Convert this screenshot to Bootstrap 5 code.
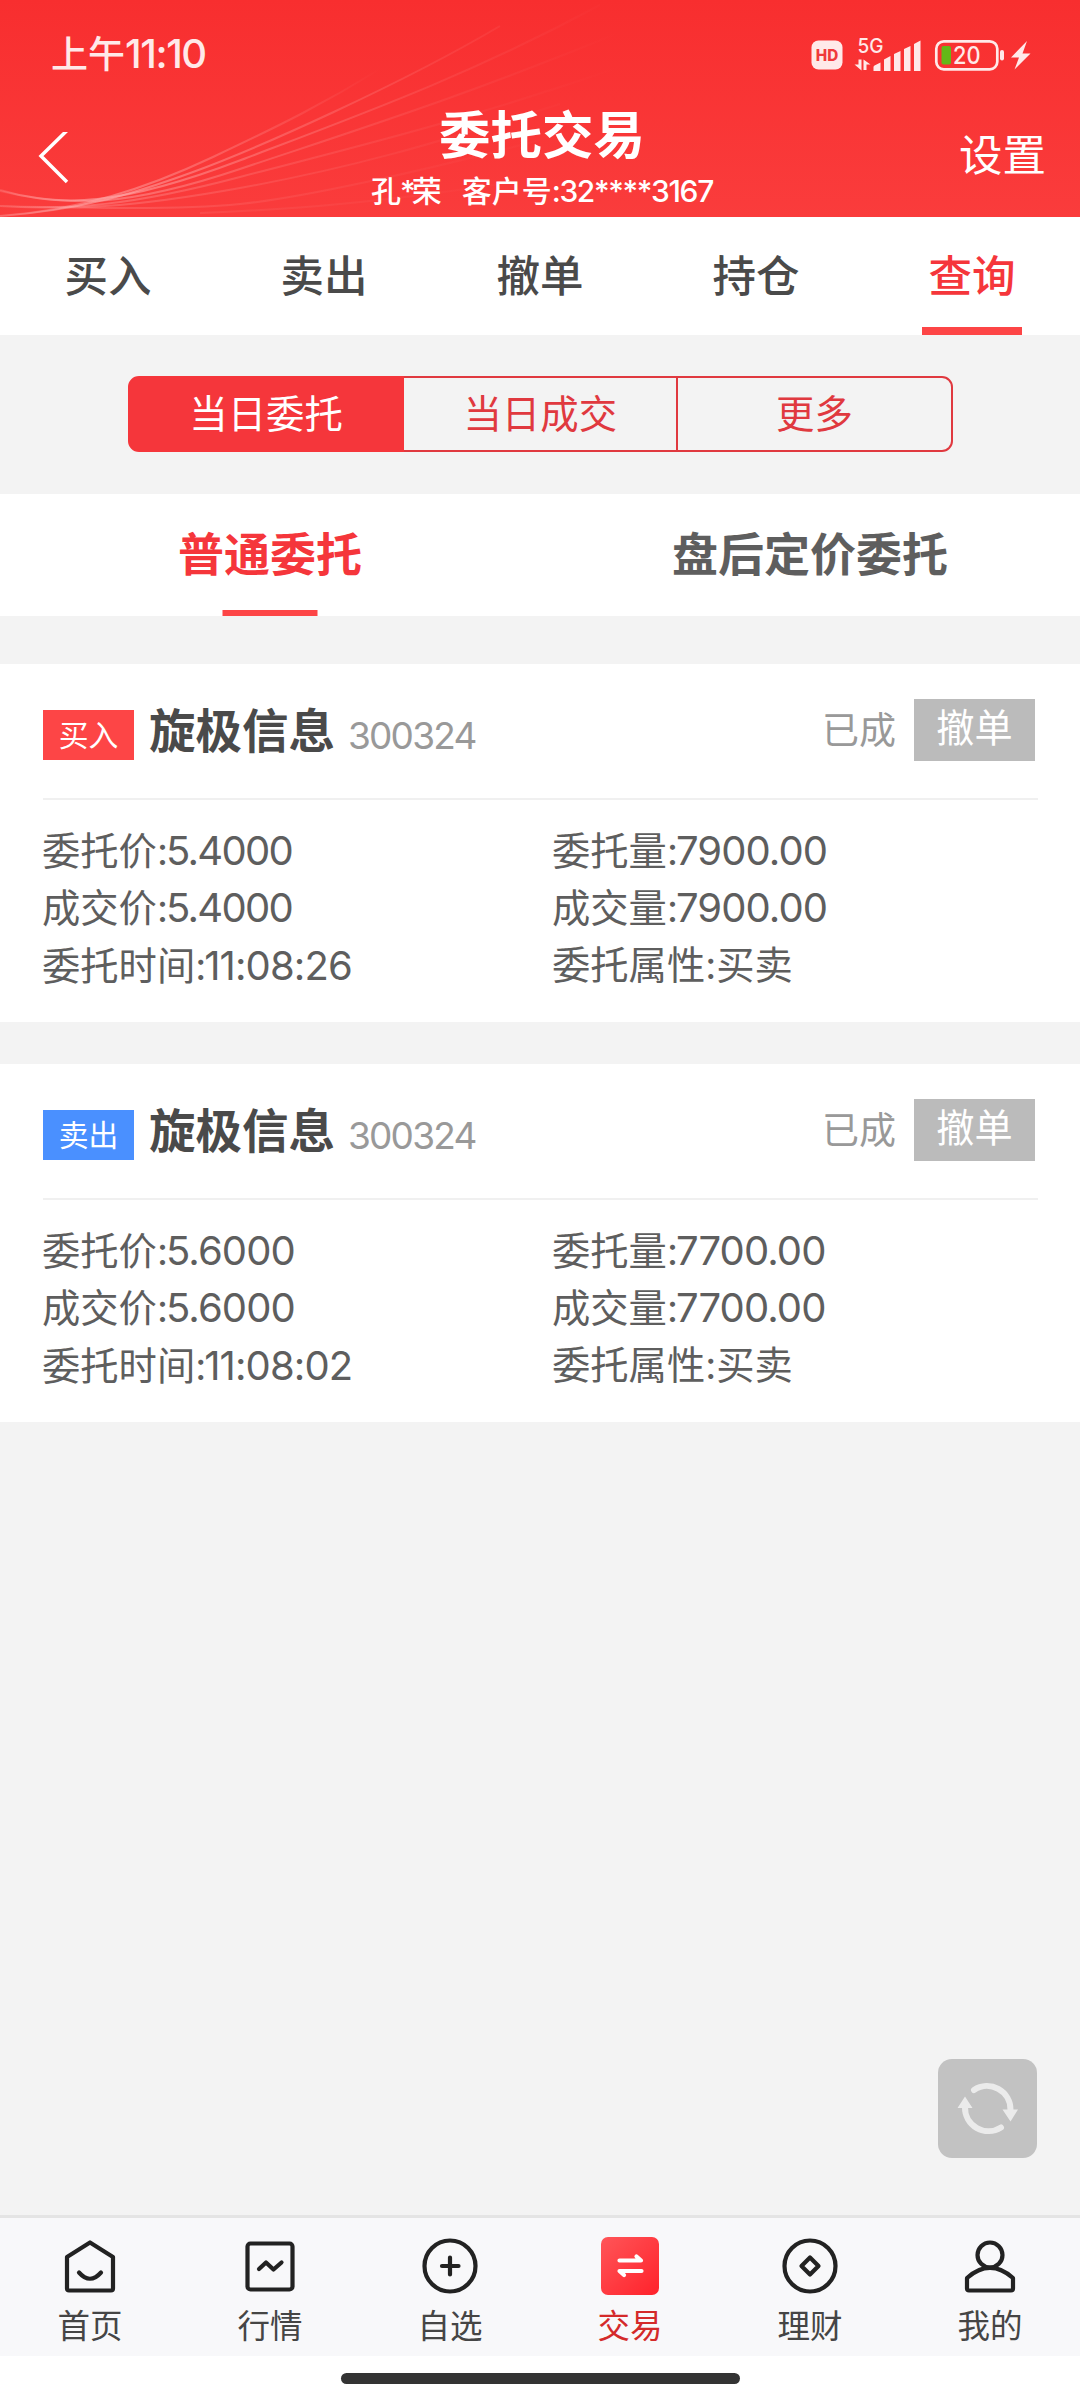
<!DOCTYPE html>
<html lang="zh-CN">
<head>
<meta charset="utf-8">
<meta name="viewport" content="width=device-width, initial-scale=1">
<title>委托交易</title>
<link href="https://cdn.jsdelivr.net/npm/bootstrap@5.3.0/dist/css/bootstrap.min.css" rel="stylesheet">
<style>
  body{width:1080px;height:2400px;background:#f3f3f3;color:#5e5e5e;font-family:Inter,"Noto Sans CJK SC",sans-serif;overflow:hidden}
  .app-head{height:217px;background:linear-gradient(#f82e2f,#fa3c3c);flex:none}
  .app-head .waves{inset:0}
  .status{height:108px;padding:0 45px 0 51px;color:#ffe9e9}
  .clock{font-size:37px;line-height:108px;font-weight:500}
  .clock span{font-size:40px;letter-spacing:-1.4px}
  .titlebar{height:109px;padding:0 34px 0 38px}
  .side{width:200px}
  .page-title{font-size:51.5px;line-height:54px;font-weight:700}
  .account{font-size:30px;line-height:40px;font-weight:500;white-space:pre;padding-top:9px}
  .account .star{letter-spacing:-4px;margin-left:-1px}
  .account .num{letter-spacing:-1.35px}
  .account .who{margin-right:4px}
  .setting{font-size:43.5px;line-height:94px}
  .main-tabs{height:118px;flex:none}
  .main-tabs .nav-link{height:118px;padding:0;color:#4a4a4a;font-size:43.5px;font-weight:500;line-height:118px;border-radius:0}
  .main-tabs .active{color:#f5363b}
  .bar-line{left:50%;bottom:0;transform:translateX(-50%);background:#fd4546}
  .main-tabs .bar-line{width:100px;height:8px}
  .segments{height:159px;padding:41px 127.5px 0 128px;flex:none}
  .segments .btn{--bs-btn-color:#e0393f;--bs-btn-border-color:#e0393f;--bs-btn-active-bg:#f5363b;--bs-btn-active-border-color:#f5363b;--bs-btn-active-color:#fff;height:76px;padding:0;border-width:2px;font-size:38.4px;line-height:70px;flex:1 1 0}
  .segments .btn-group{border-radius:11px}
  .segments .btn-group > .btn:not(:first-child){margin-left:-2px}
  .segments .btn-group > .btn:first-child{border-radius:11px 0 0 11px}
  .segments .btn-group > .btn:last-child{border-radius:0 11px 11px 0}
  .sub-tabs{height:122px;flex:none}
  .sub-tabs .nav-link{height:122px;padding:0;font-size:46px;font-weight:700;line-height:121px;color:#5e5e5e}
  .sub-tabs .active{color:#f5363b}
  .sub-tabs .bar-line{width:95px;height:6.5px}
  .order{height:358px;padding:0 42px 0 43px;margin-bottom:42px;flex:none}
  .order-head{height:136px;border-bottom:2px solid #f0f0f0}
  .side-tag{width:91px;height:50px;line-height:50px;font-size:29.8px;margin-top:8px}
  .buy{background:#fd4546}
  .sell{background:#4a90ff}
  .stock{font-size:46.5px;line-height:60px;font-weight:700;color:#4a4a4a;margin-left:15px}
  .code{font-size:37px;line-height:60px;color:#999;letter-spacing:-1.8px;margin:9px 0 0 13px}
  .state{font-size:37px;line-height:60px;color:#999;margin:0 18px 0 auto}
  .cancel{width:121px;height:62px;line-height:59px;font-size:38.2px;background:#bbb;margin:0 3px 2px 0}
  .details{padding-top:22px;font-size:38.3px;line-height:57.3px}
  .details dl{width:509px;margin:0 0 0 -1px;flex:none}
  .details dl + dl{margin-left:1px}
  .details div{height:57.3px;white-space:nowrap}
  .details b{font-weight:400;font-size:40px;letter-spacing:-.9px;margin-left:-2px}
  .details b.tight{letter-spacing:-1.7px}
  .refresh{right:43px;top:2059px;width:99px;height:99px;border-radius:14px;background:#c2c2c2}
  .bottom-nav{height:141px;border-top:3px solid #e4e4e4;background:#f8f8fa;flex:none}
  .bottom-nav a{width:180px;color:#454545;font-size:32.5px;line-height:62px;padding-top:18px}
  .bottom-nav a.on{color:#d42a2a}
  .bottom-nav svg{flex:none;width:60px;height:60px;fill:none;stroke:#222;stroke-width:4.2;stroke-linejoin:round;stroke-linecap:round}
  .gesture{height:44px;flex:none}
  .gesture div{width:399px;height:11px;background:#333;margin-top:1px}
</style>
<script src="https://cdn.jsdelivr.net/npm/bootstrap@5.3.0/dist/js/bootstrap.bundle.min.js"></script>
</head>
<body class="d-flex flex-column position-relative">
<header class="app-head position-relative text-white">
  <svg class="waves position-absolute" width="1080" height="217" fill="none" stroke-width="2">
    <defs>
      <linearGradient id="fade" gradientUnits="userSpaceOnUse" x1="0" y1="0" x2="620" y2="0">
        <stop offset="0" stop-color="#ffb0b0" stop-opacity=".2"/><stop offset=".15" stop-color="#ffb0b0" stop-opacity=".6"/>
        <stop offset=".42" stop-color="#ffb0b0" stop-opacity=".32"/><stop offset=".7" stop-color="#ffb0b0" stop-opacity=".12"/><stop offset="1" stop-color="#ffb0b0" stop-opacity="0"/>
      </linearGradient>
      <linearGradient id="fadeShort" gradientUnits="userSpaceOnUse" x1="0" y1="0" x2="380" y2="0">
        <stop offset="0" stop-color="#ffb0b0" stop-opacity=".2"/><stop offset=".3" stop-color="#ffb0b0" stop-opacity=".5"/><stop offset="1" stop-color="#ffb0b0" stop-opacity="0"/>
      </linearGradient>
    </defs>
    <path stroke="url(#fadeShort)" d="M0 216C80 210 145 189 213 157S325 103 380 69"/>
    <path stroke="url(#fade)" d="M0 216C80 210 130 195 193 172S400 85 500 26"/>
    <path stroke="url(#fade)" d="M0 190C60 208 120 206 241 160S470 75 600 5"/>
    <path stroke="url(#fade)" d="M0 191C70 208 130 206 240 169S470 95 640 24" opacity=".8"/>
    <path stroke="url(#fade)" d="M0 206C70 210 130 206 240 177S470 120 640 60" opacity=".6"/>
    <path stroke="url(#fade)" d="M0 206C70 210 130 208 240 188S430 145 560 104" opacity=".5"/>
    <path stroke="url(#fade)" d="M0 206C90 208 180 210 240 204S420 172 540 140" opacity=".4"/>
    <path stroke="url(#fade)" d="M200 213C300 209 380 202 500 184" opacity=".3"/>
  </svg>
  <div class="status d-flex justify-content-between align-items-center position-relative">
    <div class="clock">上午<span>11:10</span></div>
    <svg width="227" height="45" viewBox="808 31 227 45" fill="#ffe9e9">
      <rect x="811.5" y="39.5" width="31" height="29" rx="7"/>
      <text x="827" y="59.5" font-size="15.5" font-weight="800" text-anchor="middle" fill="#f03a3a" textLength="22.5" lengthAdjust="spacingAndGlyphs">HD</text>
      <text x="857.5" y="52" font-size="20.5" font-weight="500" textLength="26" lengthAdjust="spacingAndGlyphs">5G</text>
      <path d="M858.5 58.500h3V69.500L854.500 63.500h4zM863.500 58.500v10.500h3v-5.500h4zM873.500 70v-4q0-1 1-1.500l6-3V70zM884 70V58.500l6.500-3.500v15zM894 70V53l6.500-3v20zM904 70V48l6.500-3v25zM914 70V43l6.500-3.500V70z"/>
      <rect x="936.300" y="40.300" width="61" height="28" rx="7.500" fill="none" stroke="#ffe9e9" stroke-width="2.700"/>
      <rect x="1000" y="49" width="4" height="10.500" rx="2"/>
      <rect x="941.500" y="45" width="9.500" height="18.500" rx="2" fill="#64b817"/>
      <text x="953" y="63.300" font-size="24" font-weight="500" textLength="27.500" lengthAdjust="spacingAndGlyphs">20</text>
      <path d="M1027 40L1011 56.500h8L1014.500 68.500L1030.500 52.500h-8z"/>
    </svg>
  </div>
  <div class="titlebar d-flex justify-content-between position-relative">
    <div class="side"><svg class="mt-4" width="32" height="56" viewBox="0 4 32 56" fill="none" stroke="#fff" stroke-width="3.500"><path d="M29 2.500L3 28L29 54"/></svg></div>
    <div class="text-center"><div class="page-title">委托交易</div><div class="account"><span class="who">孔<span class="star">*</span>荣</span>  客户号<span class="num">:32****3167</span></div></div>
    <div class="side setting text-end">设置</div>
  </div>
</header>
<nav class="main-tabs nav nav-fill bg-white">
  <a class="nav-item nav-link">买入</a><a class="nav-item nav-link">卖出</a><a class="nav-item nav-link">撤单</a><a class="nav-item nav-link">持仓</a>
  <a class="nav-item nav-link active position-relative">查询<i class="bar-line position-absolute"></i></a>
</nav>
<div class="segments">
  <div class="btn-group w-100"><button class="btn active">当日委托</button><button class="btn">当日成交</button><button class="btn">更多</button></div>
</div>
<nav class="sub-tabs nav nav-justified bg-white">
  <a class="nav-item nav-link active position-relative">普通委托<i class="bar-line position-absolute"></i></a>
  <a class="nav-item nav-link">盘后定价委托</a>
</nav>
<main class="d-flex flex-column flex-grow-1 pt-5">
  <section class="order bg-white">
    <div class="order-head d-flex align-items-center">
      <span class="side-tag buy text-white text-center">买入</span><span class="stock">旋极信息</span><span class="code">300324</span>
      <span class="state">已成</span><span class="cancel text-white text-center">撤单</span>
    </div>
    <div class="details d-flex">
      <dl><div>委托价:<b class="tight">5.4000</b></div><div>成交价:<b class="tight">5.4000</b></div><div>委托时间:<b>11:08:26</b></div></dl>
      <dl><div>委托量:<b>7900.00</b></div><div>成交量:<b>7900.00</b></div><div>委托属性:买卖</div></dl>
    </div>
  </section>
  <section class="order bg-white">
    <div class="order-head d-flex align-items-center">
      <span class="side-tag sell text-white text-center">卖出</span><span class="stock">旋极信息</span><span class="code">300324</span>
      <span class="state">已成</span><span class="cancel text-white text-center">撤单</span>
    </div>
    <div class="details d-flex">
      <dl><div>委托价:<b>5.6000</b></div><div>成交价:<b>5.6000</b></div><div>委托时间:<b>11:08:02</b></div></dl>
      <dl><div>委托量:<b>7700.00</b></div><div>成交量:<b>7700.00</b></div><div>委托属性:买卖</div></dl>
    </div>
  </section>
</main>
<div class="refresh position-absolute">
  <svg width="99" height="99" viewBox="0 0 99 99" fill="none" stroke="#ebebeb" stroke-width="6" stroke-linecap="round"><path d="M36 31A23.500 23.500 0 0 1 72.500 51M63 68.500A23.500 23.500 0 0 1 27 48"/><path d="M64.500 50.500H80L72.500 62.500zM19.500 49H34.500L27 37.500z" fill="#ebebeb" stroke="none"/></svg>
</div>
<nav class="bottom-nav d-flex">
  <a class="d-flex flex-column align-items-center text-decoration-none"><svg viewBox="0 0 60 60"><path d="M30 6.500L53 21V52.500Q53 54.500 51 54.500H9Q7 54.500 7 52.500V21z"/><path d="M19 36.500Q30 49 41 36.500"/></svg>首页</a>
  <a class="d-flex flex-column align-items-center text-decoration-none"><svg viewBox="0 0 60 60"><rect x="7.500" y="7.500" width="45" height="46" rx="3"/><path d="M19 33L26 26.500L33.500 33.500L41.500 26.500"/></svg>行情</a>
  <a class="d-flex flex-column align-items-center text-decoration-none"><svg viewBox="0 0 60 60"><circle cx="30" cy="30" r="25.500"/><path d="M30 21.500V38.500M22 30H38.500"/></svg>自选</a>
  <a class="on d-flex flex-column align-items-center text-decoration-none"><svg viewBox="0 0 60 60"><defs><linearGradient id="hot" x1="0" y1="0" x2="1" y2="1"><stop stop-color="#ff5558"/><stop offset="1" stop-color="#ff222b"/></linearGradient></defs><rect x="1" y="1" width="58" height="58" rx="7" fill="url(#hot)" stroke="none"/><path d="M19.500 24.500H41L36.500 20.500M41.500 35H19.500L24 39" stroke="#fff"/></svg>交易</a>
  <a class="d-flex flex-column align-items-center text-decoration-none"><svg viewBox="0 0 60 60"><circle cx="30" cy="30" r="25.500"/><path d="M30 21.500L38.500 30L30 38.500L21.500 30z"/></svg>理财</a>
  <a class="d-flex flex-column align-items-center text-decoration-none"><svg viewBox="0 0 60 60"><circle cx="30" cy="19" r="12.500"/><path d="M7 52.500V42Q30 21.500 53 42V52.500Q53 54.500 51 54.500H9Q7 54.500 7 52.500z"/></svg>我的</a>
</nav>
<div class="gesture bg-white d-flex justify-content-center align-items-center"><div class="rounded-pill"></div></div>
</body>
</html>
